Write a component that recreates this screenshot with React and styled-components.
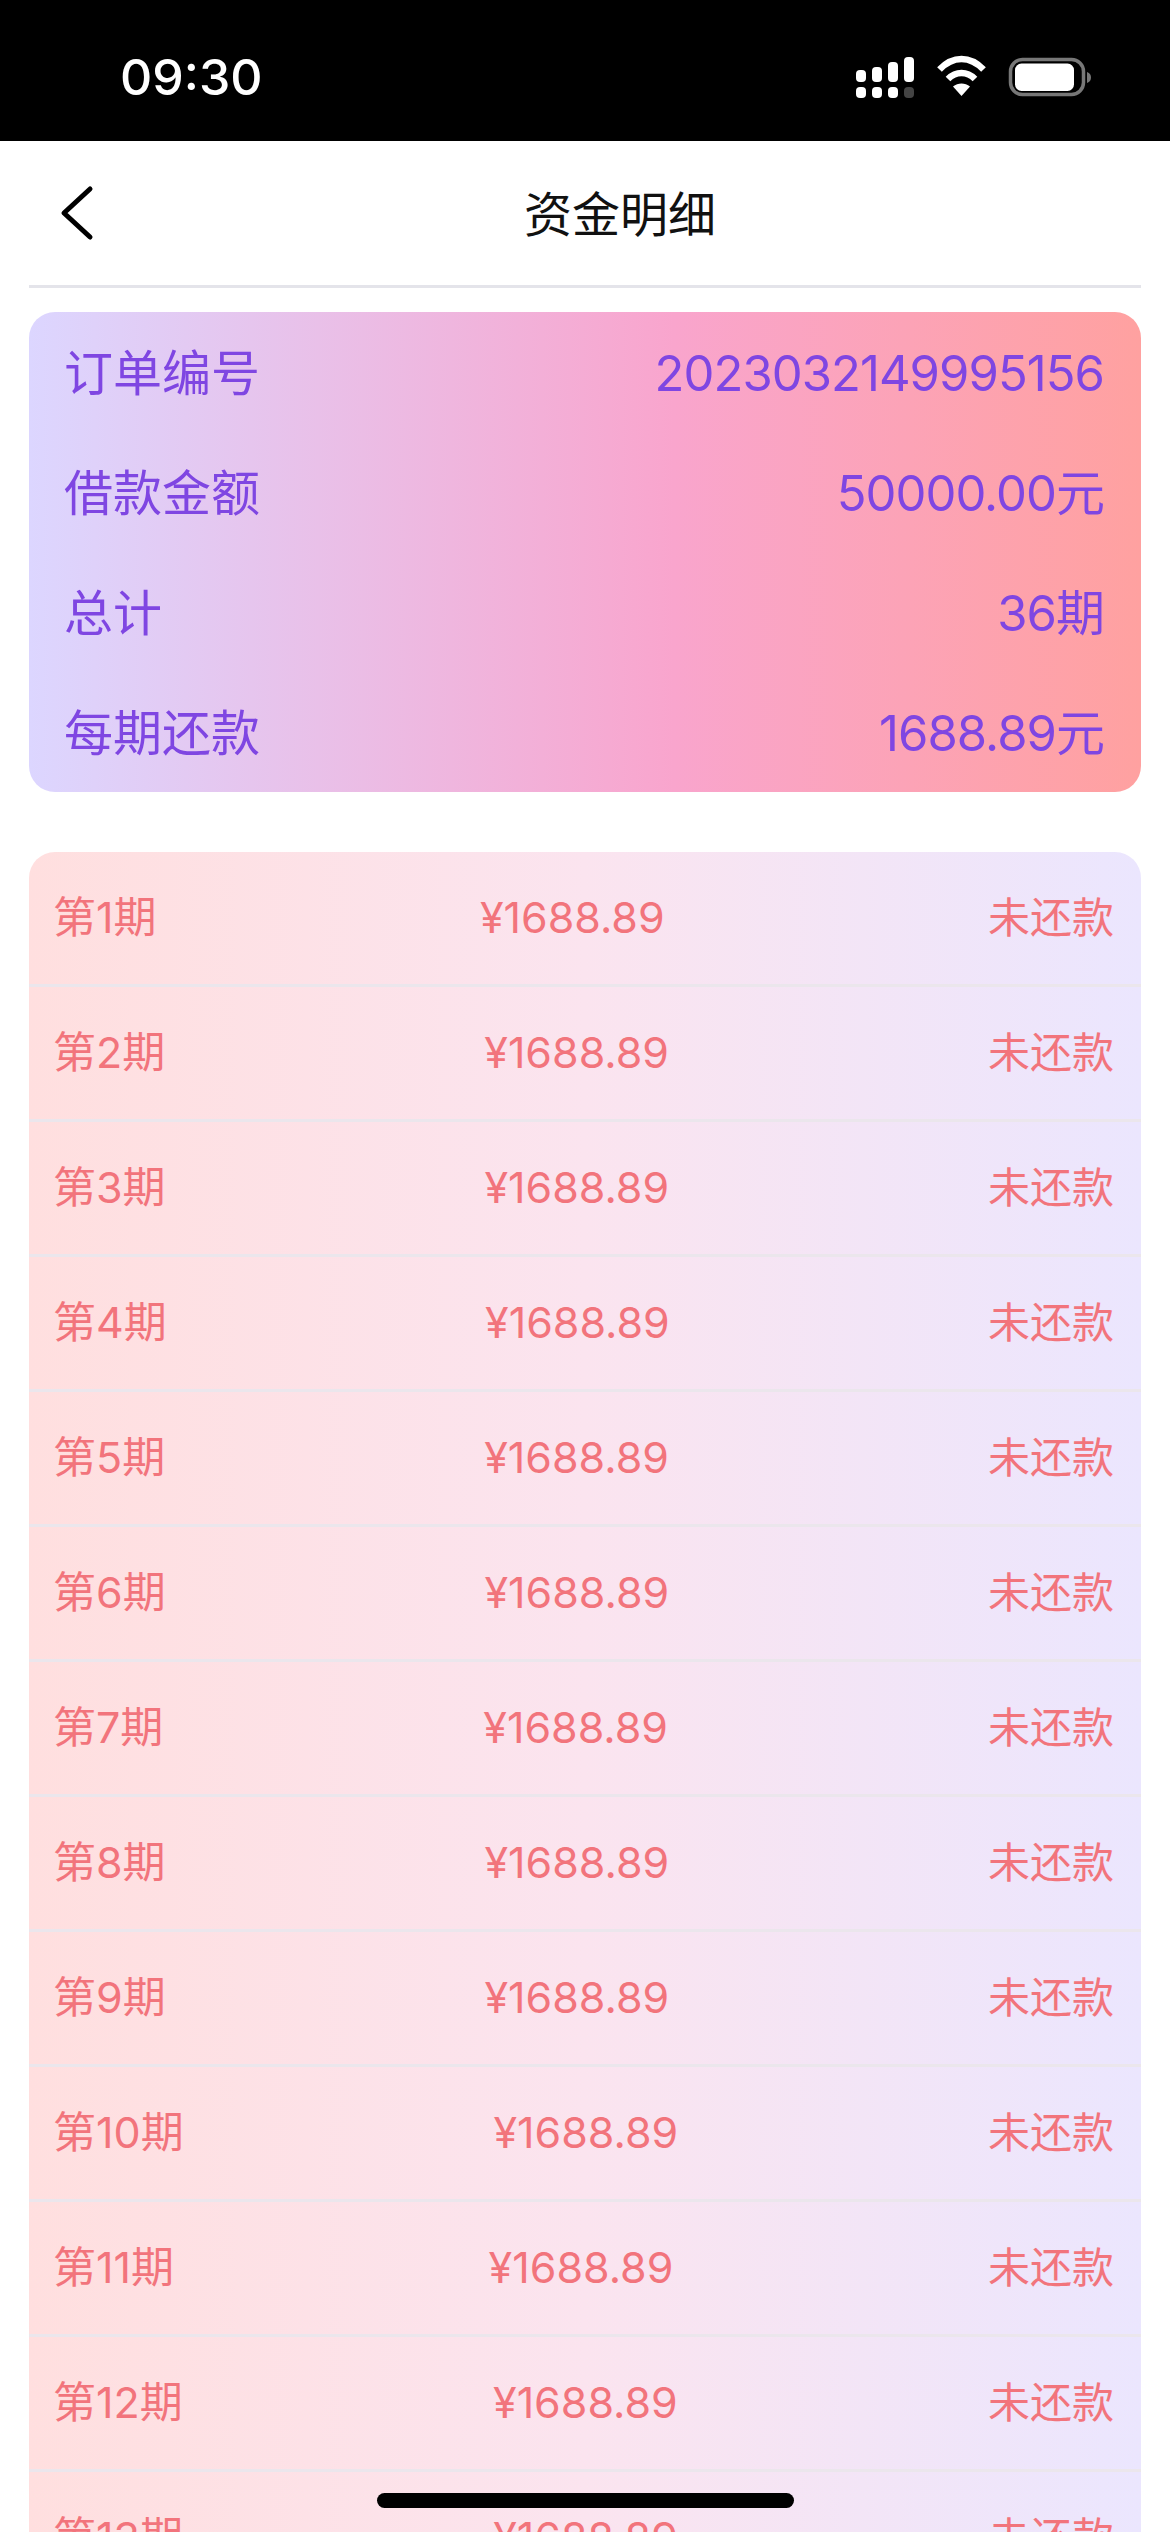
import React from 'react';
import styled, { createGlobalStyle } from 'styled-components';

const GlobalStyle = createGlobalStyle`
  html, body {
    margin: 0;
    padding: 0;
    background: #fff;
  }
  * {
    box-sizing: border-box;
  }
`;

const fontStack = `Inter, "Noto Sans CJK SC", sans-serif`;

const Page = styled.div`
  position: relative;
  width: 1170px;
  height: 2532px;
  overflow: hidden;
  background: #fff;
  font-family: ${fontStack};
`;

const StatusBar = styled.div`
  height: 141px;
  background: #000;
  display: flex;
  align-items: flex-start;
  justify-content: space-between;
  padding: 49px 74px 0 120px;
`;

const Clock = styled.span`
  color: #fff;
  font-size: 50px;
  line-height: 56px;
  font-weight: 500;
`;

const StatusIcons = styled.svg`
  display: block;
  margin-top: 6px;
`;

const Header = styled.header`
  height: 147px;
  margin: 0 29px;
  display: flex;
  align-items: center;
  border-bottom: 3px solid #e4e4ea;
`;

const BackButton = styled.button`
  width: 70px;
  height: 60px;
  padding: 0 0 0 30px;
  border: none;
  background: none;
  display: flex;
  align-items: center;
`;

const Title = styled.h1`
  flex: 1;
  margin: 4px 0 0;
  text-align: center;
  font-size: 48px;
  line-height: 60px;
  font-weight: 400;
  color: #111;
`;

const Content = styled.main`
  padding: 24px 29px 0;
`;

const SummaryCard = styled.section`
  border-radius: 26px;
  background: linear-gradient(90deg, #dcd6ff 0%, #f9a5cd 58%, #ffa1a0 100%);
  padding: 0 37px 0 35px;
  margin-bottom: 60px;
`;

const SummaryRow = styled.div`
  height: 120px;
  padding-top: 3px;
  line-height: 117px;
  display: flex;
  align-items: baseline;
  justify-content: space-between;
  font-size: 49px;
  color: #7f46e2;
`;

const SummaryValue = styled.span`
  letter-spacing: -0.95px;
`;

const ScheduleCard = styled.section`
  border-radius: 26px 26px 0 0;
  background: linear-gradient(90deg, #ffdfdf 0%, #fbe4ef 50%, #ebe6fe 100%);
`;

const ScheduleRow = styled.div`
  height: 135px;
  line-height: 127px;
  padding: 2px 27px 3px 24px;
  display: flex;
  align-items: baseline;
  justify-content: space-between;
  border-bottom: 3px solid #ebe6ec;
  font-size: 43px;
  color: #f2747c;
`;

const RepayStatus = styled.span`
  font-size: 42px;
`;

const HomeIndicator = styled.div`
  position: absolute;
  left: 377px;
  bottom: 24px;
  width: 417px;
  height: 15px;
  border-radius: 8px;
  background: #000;
`;

const summary = [
  ['订单编号', '2023032149995156'],
  ['借款金额', '50000.00元'],
  ['总计', '36期'],
  ['每期还款', '1688.89元'],
];

// only the rows that fit on screen, the 13th runs off the bottom
const periods = Array.from({ length: 13 }, (_, i) => i + 1);

const App = () => (
  <Page>
    <GlobalStyle />
    <StatusBar>
      <Clock>09:30</Clock>
      <StatusIcons width="240" height="44" viewBox="856 55 240 44">
        <g fill="#fff">
          <rect x="856" y="70" width="10" height="12" rx="4" />
          <rect x="872" y="67" width="10" height="15" rx="4" />
          <rect x="888" y="62" width="10" height="20" rx="4" />
          <rect x="904" y="57" width="10" height="25" rx="4" />
          <rect x="856" y="87" width="10" height="11" rx="4" />
          <rect x="872" y="87" width="10" height="11" rx="4" />
          <rect x="888" y="87" width="10" height="11" rx="4" />
        </g>
        <rect x="904" y="87" width="10" height="11" rx="4" fill="#444" />
        <g fill="none" stroke="#fff" strokeWidth="6.5">
          <path d="M939.5 69.5 C953 55.5 970 55.5 983.5 69.5" />
          <path d="M948 79 C956 71 967 71 975 79" />
        </g>
        <path d="M961.5 96 L953 86.5 C958 82.5 965 82.5 970 86.5 Z" fill="#fff" />
        <rect x="1010.5" y="59.5" width="73" height="35" rx="12" fill="none" stroke="#777" strokeWidth="3.5" />
        <rect x="1015" y="63.5" width="59" height="27.5" rx="6.5" fill="#fff" />
        <path d="M1087 72 C1090 73 1091 75 1091 77.5 C1091 80 1090 82 1087 83 Z" fill="#777" />
      </StatusIcons>
    </StatusBar>

    <Header>
      <BackButton aria-label="返回">
        <svg width="36" height="58" viewBox="0 0 36 58">
          <path d="M31 5 L5 29 L31 53" fill="none" stroke="#000" strokeWidth="5" strokeLinecap="round" strokeLinejoin="round" />
        </svg>
      </BackButton>
      <Title>资金明细</Title>
    </Header>

    <Content>
      <SummaryCard>
        {summary.map(([label, value]) => (
          <SummaryRow key={label}>
            <span>{label}</span>
            <SummaryValue>{value}</SummaryValue>
          </SummaryRow>
        ))}
      </SummaryCard>

      <ScheduleCard>
        {periods.map((n) => (
          <ScheduleRow key={n}>
            <span>第{n}期</span>
            <span>¥1688.89</span>
            <RepayStatus>未还款</RepayStatus>
          </ScheduleRow>
        ))}
      </ScheduleCard>
    </Content>

    <HomeIndicator />
  </Page>
);

export default App;
